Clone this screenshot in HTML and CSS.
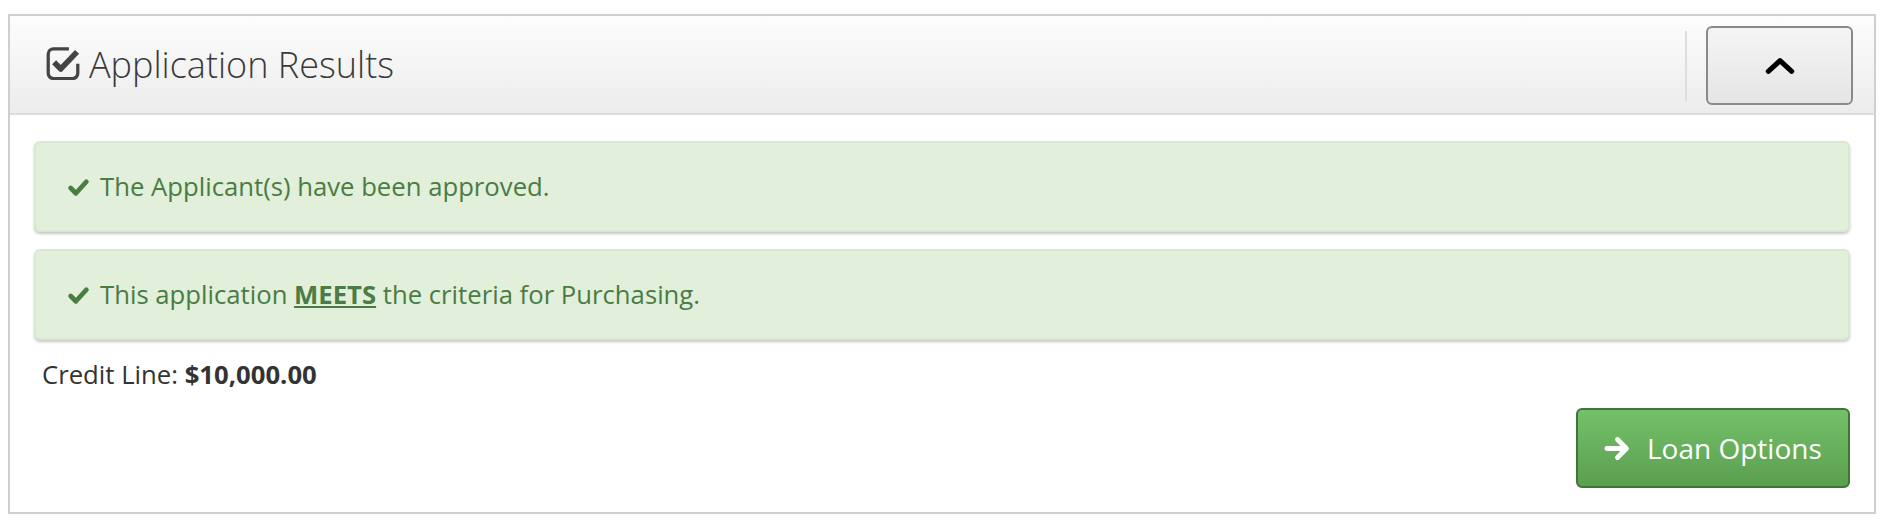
FILE: index.html
```html
<!DOCTYPE html>
<html lang="en">
<head>
<meta charset="UTF-8">
<meta name="viewport" content="width=device-width, initial-scale=1.0">
<title>Application Results</title>
<link rel="stylesheet" href="styles.css">
</head>
<body>
<div class="panel">
    <div class="panel-heading">
        <h3 class="panel-title">
            <svg class="icon-title" viewBox="3 2.5 23 23" width="34" height="34">
                <path d="M18.5 4.5H8a3.5 3.5 0 0 0-3.5 3.5v13a3.5 3.5 0 0 0 3.5 3.5h13a3.5 3.5 0 0 0 3.5-3.5v-6.5" fill="none" stroke="#444" stroke-width="2.2"/>
                <path d="M8.5 13.5l4.5 4.5 11-11.5" fill="none" stroke="#444" stroke-width="3.8" stroke-linejoin="round"/>
            </svg>
            <span>Application Results</span>
        </h3>
        <div class="heading-tools">
            <span class="divider"></span>
            <button type="button" class="btn-collapse">
                <svg viewBox="0 0 28 16" width="30" height="17">
                    <path d="M3 13.5l11-10 11 10" fill="none" stroke="#000" stroke-width="4.8" stroke-linecap="round" stroke-linejoin="round"/>
                </svg>
            </button>
        </div>
    </div>
    <div class="panel-body">
        <div class="alert">
            <svg class="icon-check" viewBox="0 0 22 18" width="23" height="19">
                <path d="M3.5 9.5l5 5 10-11" fill="none" stroke="#4a7c43" stroke-width="4.6" stroke-linecap="round" stroke-linejoin="round"/>
            </svg>
            <span>The Applicant(s) have been approved.</span>
        </div>
        <div class="alert">
            <svg class="icon-check" viewBox="0 0 22 18" width="23" height="19">
                <path d="M3.5 9.5l5 5 10-11" fill="none" stroke="#4a7c43" stroke-width="4.6" stroke-linecap="round" stroke-linejoin="round"/>
            </svg>
            <span>This application <b class="meets">MEETS</b> the criteria for Purchasing.</span>
        </div>
        <div class="credit-line">Credit Line: <b>$10,000.00</b></div>
        <div class="actions">
            <button type="button" class="btn-success">
                <svg viewBox="0 0 26 24" width="29" height="27">
                    <path d="M3.5 12h17M13 4l8 8-8 8" fill="none" stroke="#fff" stroke-width="4.4" stroke-linecap="round" stroke-linejoin="round"/>
                </svg>
                <span>Loan Options</span>
            </button>
        </div>
    </div>
</div>
</body>
</html>
```

FILE: styles.css
```css
body {
    margin: 0;
    padding: 14px 8px 8px;
    font-family: "Open Sans", "Liberation Sans", sans-serif;
    font-size: 25.7px;
    color: #333;
    background-color: #fff;
}
.panel {
    border: 2px solid #cfcfcf;
    background-color: #fff;
}
.panel-heading {
    display: flex;
    align-items: center;
    justify-content: space-between;
    height: 97px;
    padding: 0 21px 0 36px;
    background: linear-gradient(to bottom, #fdfdfd, #ececec);
    border-bottom: 2px solid #dcdcdc;
}
.panel-title {
    display: flex;
    align-items: center;
    gap: 9px;
    margin: 0;
    font-size: 36px;
    font-weight: 300;
    color: #3a3a3a;
}
.icon-title {
    margin-top: -3px;
}
.heading-tools {
    display: flex;
    align-items: center;
    gap: 19px;
    margin-top: 2px;
}
.divider {
    width: 2px;
    height: 70px;
    background-color: #dedede;
}
.btn-collapse {
    display: flex;
    align-items: center;
    justify-content: center;
    width: 147px;
    height: 79px;
    padding: 0;
    background: linear-gradient(to bottom, #f5f5f5, #e5e5e5);
    border: 2px solid #8a8a8a;
    border-radius: 6px;
    cursor: pointer;
}
.panel-body {
    padding: 26px 24px 24px 24px;
}
.alert {
    display: flex;
    align-items: center;
    gap: 10px;
    height: 91px;
    box-sizing: border-box;
    padding: 0 31px;
    margin-bottom: 17px;
    color: #4a7c43;
    background-color: #e1efdb;
    border: 2px solid #d8e9cf;
    border-radius: 6px;
    box-shadow: 0 2px 3px rgba(0, 0, 0, 0.22);
}
.icon-check {
    margin-top: 1px;
}
.meets {
    text-decoration: underline;
}
.credit-line {
    margin-top: 18px;
    padding-left: 8px;
    line-height: 34px;
}
.actions {
    display: flex;
    justify-content: flex-end;
    margin-top: 16px;
}
.btn-success {
    display: flex;
    align-items: center;
    gap: 15px;
    width: 274px;
    height: 80px;
    padding: 0 0 0 25px;
    font-family: inherit;
    font-size: 28px;
    color: #fff;
    background: linear-gradient(to bottom, #74c06a, #5b9f50);
    border: 2px solid #3f7537;
    border-radius: 6px;
    cursor: pointer;
}
```
